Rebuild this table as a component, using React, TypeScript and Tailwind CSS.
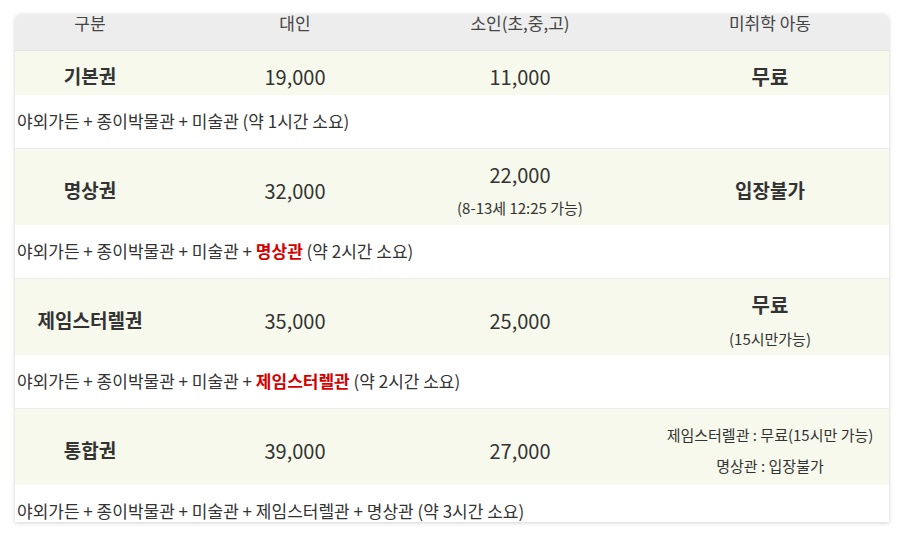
const FONT = { fontFamily: '"Noto Sans CJK KR", "Noto Sans", sans-serif' };

type Row = {
  name: string;
  adult: string;
  child: string;
  childNote?: string;
  kid: React.ReactNode;
  desc: React.ReactNode;
};

const base = '야외가든 + 종이박물관 + 미술관';

const rows: Row[] = [
  {
    name: '기본권',
    adult: '19,000',
    child: '11,000',
    kid: <span className="text-[20px] font-bold">무료</span>,
    desc: <>{base} (약 1시간 소요)</>,
  },
  {
    name: '명상권',
    adult: '32,000',
    child: '22,000',
    childNote: '(8-13세 12:25 가능)',
    kid: <span className="text-[19px] font-bold">입장불가</span>,
    desc: (
      <>
        {base} + <span className="font-bold text-[#d40000]">명상관</span> (약 2시간 소요)
      </>
    ),
  },
  {
    name: '제임스터렐권',
    adult: '35,000',
    child: '25,000',
    kid: (
      <div className="flex flex-col items-center gap-[12px]">
        <span className="text-[20px] font-bold leading-[24px]">무료</span>
        <span className="text-[15px] leading-[20px]">(15시만가능)</span>
      </div>
    ),
    desc: (
      <>
        {base} + <span className="font-bold text-[#d40000]">제임스터렐관</span> (약 2시간 소요)
      </>
    ),
  },
  {
    name: '통합권',
    adult: '39,000',
    child: '27,000',
    kid: (
      <div className="flex flex-col items-center gap-[11px] text-[15px] leading-[20px]">
        <span>제임스터렐관 : 무료(15시만 가능)</span>
        <span>명상관 : 입장불가</span>
      </div>
    ),
    desc: <>{base} + 제임스터렐관 + 명상관 (약 3시간 소요)</>,
  },
];

const cols = 'grid grid-cols-[150px_260px_190px_1fr]';

export default function App() {
  return (
    <div className="min-h-[537px] w-[904px] bg-white pt-[14px] pl-[15px]" style={FONT}>
      <div className="w-[874px] rounded-t-[6px] bg-white text-[#333] shadow-[0_1px_4px_rgba(0,0,0,0.18)]">
        {/* header */}
        <div className={`${cols} h-[37px] rounded-t-[6px] border-b border-[#e2e2e2] bg-[#ededed] text-[17px] leading-[18px] text-[#444]`}>
          <div className="text-center">구분</div>
          <div className="text-center">대인</div>
          <div className="text-center">소인(초,중,고)</div>
          <div className="pl-[36px] text-center">미취학 아동</div>
        </div>

        {rows.map((r, i) => {
          const last = i === rows.length - 1;
          return (
            <div key={r.name}>
              <div
                className={`${cols} items-center bg-[#f6f9eb] pt-[7px] ${i === 0 ? 'h-[44px]' : 'h-[76px]'}`}
              >
                <div className="text-center text-[19px] font-bold">{r.name}</div>
                <div className="text-center text-[20px]">{r.adult}</div>
                <div className="flex flex-col items-center">
                  <span className="text-[20px] leading-[24px]">{r.child}</span>
                  {r.childNote && <span className="mt-[11px] text-[15px] leading-[20px]">{r.childNote}</span>}
                </div>
                <div className="flex justify-center pl-[36px]">{r.kid}</div>
              </div>
              {last ? (
                <div className="h-[37px] pt-[15px] pl-[2px] text-[17px] leading-[22px]">{r.desc}</div>
              ) : (
                <div className="flex h-[54px] items-center border-b border-[#ececec] pb-[2px] pl-[2px] text-[17px]">
                  <span>{r.desc}</span>
                </div>
              )}
            </div>
          );
        })}
      </div>
    </div>
  );
}
